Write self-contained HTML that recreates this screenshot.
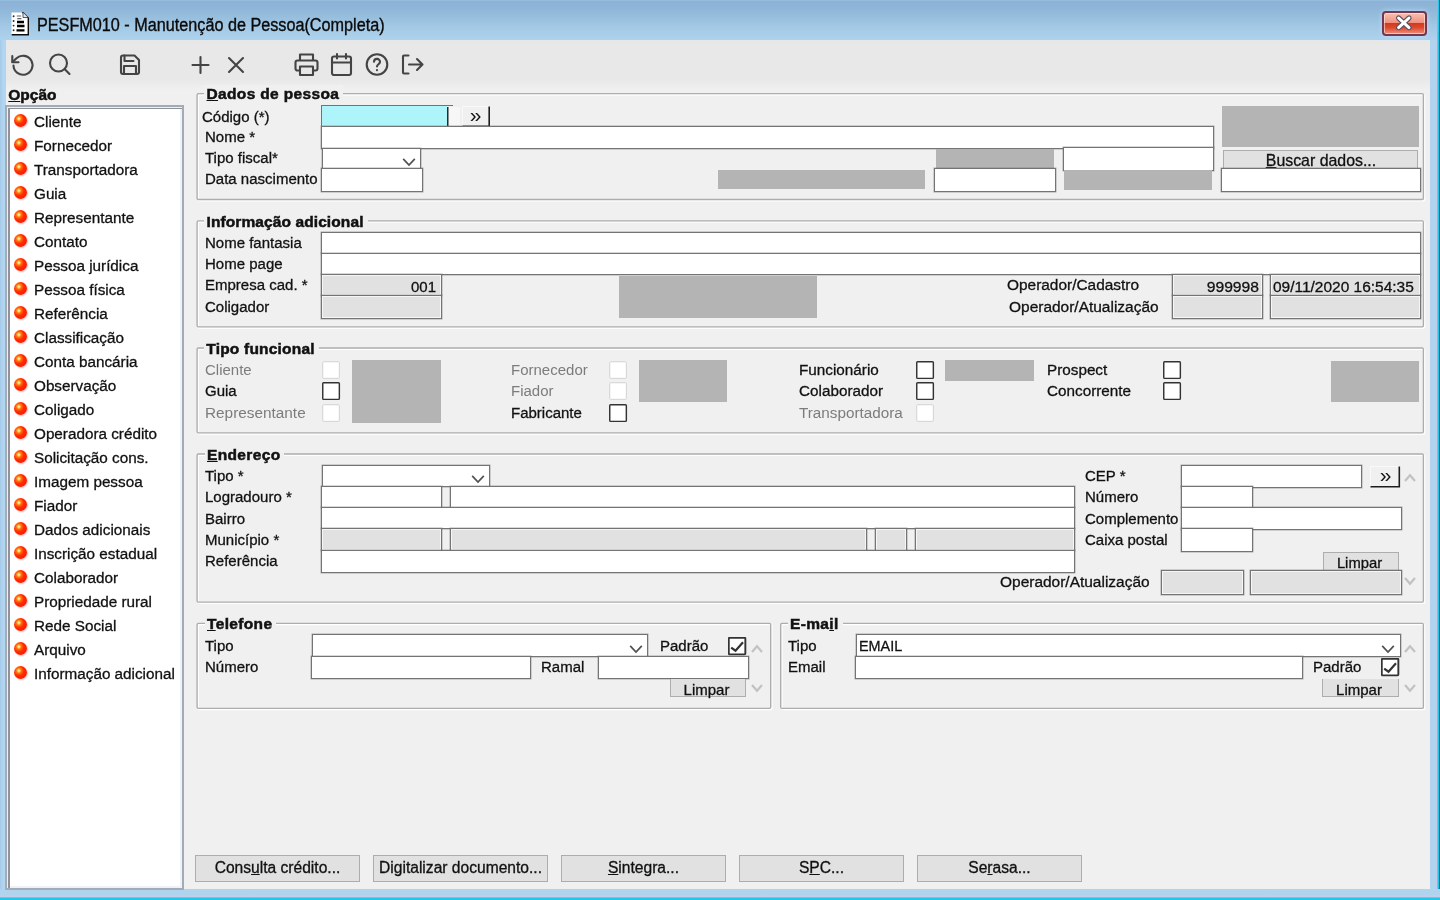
<!DOCTYPE html><html lang="pt-BR"><head><meta charset="utf-8"><title>PESFM010 - Manutenção de Pessoa(Completa)</title><style>
*{box-sizing:border-box;margin:0;padding:0}
html,body{width:1440px;height:900px;overflow:hidden}
body{position:relative;background:#b0d4ee;font-family:"Liberation Sans",sans-serif;font-size:15px;color:#111}
div,span,svg{position:absolute}
.l{filter:blur(.3px);white-space:nowrap;line-height:18px;height:18px;font-size:15.5px;color:#111;-webkit-text-stroke:0.3px #111;transform:scaleX(.968);transform-origin:0 0}
.dis{color:#7c7c7c;-webkit-text-stroke:0}
.b{transform:none;font-weight:bold;font-size:15.5px;letter-spacing:.35px;background:#f0f0f0;padding:0 4px 0 2.5px;-webkit-text-stroke:0.5px #111}
.f{background:#fff;border:1px solid #747474;box-shadow:0 0 0 .5px rgba(100,100,100,.5)}
.d{background:#e1e1e1;border:1px solid #747474;box-shadow:inset 0 0 0 1px #f6f6f6,0 0 0 .5px rgba(100,100,100,.5)}
.g{background:#b4b4b4}
.fs{border:1px solid #b9b9b9;border-radius:3px;box-shadow:inset 1px 1px 0 #fbfbfb,1px 1px 0 #fbfbfb}
.btn{filter:blur(.3px);background:#e1e1e1;border:1px solid #adadad;text-align:center;white-space:nowrap;font-size:15px;color:#111;-webkit-text-stroke:0.3px #111}
.cb{width:18px;height:18px;background:#fff;border:2px solid #454545;box-shadow:inset 0 0 0 .5px #999}
.cbd{width:18px;height:18px;background:#fff;border:1px solid #d0d0d0}
u{text-decoration:underline;text-underline-offset:1px}
.r{text-align:right;transform-origin:100% 0}
</style></head><body>
<div style="left:0;top:0;width:1440px;height:40px;background:linear-gradient(#9ac1e2 0,#8cb3d5 1.5px,#8fb6d8 8px,#97bddc 16px,#a2c8e5 26px,#acd2ed 39px)"></div>
<div style="left:0;top:40px;width:6px;height:860px;background:linear-gradient(90deg,#a4cae8,#b2d5f0 50%)"></div>
<div style="left:1430px;top:40px;width:8px;height:856px;background:linear-gradient(90deg,#b0d4ee 0,#b0d4ee 5.5px,#c4cbea 6.5px,#c4cbea 7px,#8fdcf2 8px)"></div>
<div style="left:1437px;top:0;width:3px;height:900px;background:linear-gradient(90deg,#6fd8f2,#22c6e6 40%,#22c6e6 66%,#0a6a94 67%)"></div>
<div style="left:0;top:889px;width:1440px;height:8px;background:#b0d4ee"></div>
<div style="left:0;top:895px;width:1440px;height:5px;background:linear-gradient(#b8d2ee 0,#c6cbe9 1.5px,#8fdcf2 2px,#22c6e6 3px)"></div>
<svg style="left:10px;top:11px" width="20" height="26" viewBox="0 0 20 26"><path d="M1.5 1.5h11.5l5 5v17h-16.5z" fill="#fff"/><path d="M12.5 1.2l5.8 5.8v16.7h-16.6" fill="none" stroke="#0c0c0c" stroke-width="1.4"/><path d="M13 1.5v5h5" fill="#dfe6ee" stroke="#333" stroke-width=".8"/><g fill="#2a2a2a"><circle cx="3.6" cy="5.2" r=".95"/><circle cx="3.6" cy="10" r=".95"/><circle cx="3.6" cy="14.6" r=".95"/><circle cx="3.6" cy="19.2" r=".95"/></g><path d="M6.8 5h4.4M7.2 7.6h4.2" stroke="#666" stroke-width="1.2"/><path d="M7 11h7M7 15h7.5M6.5 19.3h8" stroke="#000" stroke-width="2.3"/></svg>
<span id="title" style="left:37px;top:14px;font-size:18px;line-height:22px;white-space:nowrap;color:#0a0a0a;-webkit-text-stroke:.35px #0a0a0a;filter:blur(.3px);transform-origin:0 50%;transform:scaleX(.9)">PESFM010 - Manutenção de Pessoa(Completa)</span>
<div style="left:1382px;top:11px;width:45px;height:25px;border-radius:4px;border:2px solid #743650;background:linear-gradient(#f9c0b0 0,#f09282 46%,#d8381a 50%,#dc4a30 70%,#ee907a 100%);box-shadow:inset 0 0 0 1px rgba(255,235,225,.6),0 0 4px 1px rgba(200,230,255,.55)"></div>
<svg style="left:1394px;top:13px" width="20" height="20" viewBox="0 0 20 20"><path d="M4.6 5L15 14.6M15 5L4.6 14.6" stroke="#5a5060" stroke-width="5.2" stroke-linecap="round"/><path d="M4.6 5L15 14.6M15 5L4.6 14.6" stroke="#fff" stroke-width="3" stroke-linecap="round"/></svg>
<div class="" style="left:6px;top:40px;width:1424px;height:849px;background:#f0f0f0"></div>
<div class="" style="left:6px;top:40px;width:1424px;height:51px;background:linear-gradient(#e2e9f0 0,#e9e6e4 2.5px,#e8e8e8 5px,#e8e8e8 39px,#f0f0f0 50px)"></div>
<svg style="left:8px;top:50px" width="30" height="30" viewBox="0 0 30 30" fill="none" stroke="#444" stroke-width="2.1" stroke-linecap="round" stroke-linejoin="round"><path d="M5.5 15.5a9.5 9.5 0 1 0 3-7.2L4.5 12"/><path d="M4.3 6v6.2h6.2"/></svg>
<svg style="left:45px;top:50px" width="30" height="30" viewBox="0 0 30 30" fill="none" stroke="#444" stroke-width="2.1" stroke-linecap="round" stroke-linejoin="round"><circle cx="13.5" cy="13" r="8.5"/><path d="M19.8 19.3L24.5 24"/></svg>
<svg style="left:115px;top:50px" width="30" height="30" viewBox="0 0 30 30" fill="none" stroke="#444" stroke-width="2.1" stroke-linecap="round" stroke-linejoin="round"><path d="M6 7.5a2 2 0 0 1 2-2h11.5l4.5 4.5v12a2 2 0 0 1-2 2h-14a2 2 0 0 1-2-2z"/><path d="M9.5 5.5v5.5h9M9 24v-8h12v8"/></svg>
<svg style="left:185px;top:50px" width="30" height="30" viewBox="0 0 30 30" fill="none" stroke="#444" stroke-width="2.1" stroke-linecap="round" stroke-linejoin="round"><path d="M15.5 7v16M7.5 15h16"/></svg>
<svg style="left:221px;top:50px" width="30" height="30" viewBox="0 0 30 30" fill="none" stroke="#444" stroke-width="2.1" stroke-linecap="round" stroke-linejoin="round"><path d="M8 8l14 14M22 8l-14 14"/></svg>
<svg style="left:291px;top:50px" width="32" height="30" viewBox="0 0 32 30" fill="none" stroke="#444" stroke-width="2.1" stroke-linecap="round" stroke-linejoin="round"><path d="M9 10.5V4.5h13v6M9 20.5h-2.5a2 2 0 0 1-2-2v-6a2 2 0 0 1 2-2h18a2 2 0 0 1 2 2v6a2 2 0 0 1-2 2H22"/><path d="M9 16.5h13v8.5h-13z"/></svg>
<svg style="left:327px;top:50px" width="30" height="30" viewBox="0 0 30 30" fill="none" stroke="#444" stroke-width="2.1" stroke-linecap="round" stroke-linejoin="round"><rect x="5" y="6.5" width="19" height="18.5" rx="2"/><path d="M5 12.5h19M10 4v4.5M19 4v4.5"/></svg>
<svg style="left:362px;top:50px" width="30" height="30" viewBox="0 0 30 30" fill="none" stroke="#444" stroke-width="2.1" stroke-linecap="round" stroke-linejoin="round"><circle cx="15" cy="14.5" r="10.3"/><path d="M12 11.8a3 3 0 0 1 6 .2c0 2-3 2.5-3 4.5"/><path d="M15 20v.2"/></svg>
<svg style="left:398px;top:50px" width="30" height="30" viewBox="0 0 30 30" fill="none" stroke="#444" stroke-width="2.1" stroke-linecap="round" stroke-linejoin="round"><path d="M10.5 5.5h-4.5a1 1 0 0 0-1 1v16a1 1 0 0 0 1 1h4.5M11 14.5h13M19 9l5.5 5.5-5.5 5.5"/></svg>
<svg style="left:0;top:0" width="1440" height="900" viewBox="0 0 1440 900" fill="none"><rect x="198.35" y="94.85" width="1226.3" height="105.95" rx="1" stroke="#fff" stroke-width="1.3"/><rect x="198.35" y="222.15" width="1226.3" height="105.9" rx="1" stroke="#fff" stroke-width="1.3"/><rect x="198.35" y="349.25" width="1226.3" height="84.9" rx="1" stroke="#fff" stroke-width="1.3"/><rect x="198.35" y="455.25" width="1226.3" height="148.1" rx="1" stroke="#fff" stroke-width="1.3"/><rect x="198.35" y="624.6" width="573.6" height="84.95" rx="1" stroke="#fff" stroke-width="1.3"/><rect x="781.95" y="624.6" width="642.7" height="84.95" rx="1" stroke="#fff" stroke-width="1.3"/><rect x="197.1" y="93.6" width="1226.3" height="105.95" rx="1.3" stroke="#adadad" stroke-width="1.35"/><rect x="197.1" y="220.9" width="1226.3" height="105.9" rx="1.3" stroke="#adadad" stroke-width="1.35"/><rect x="197.1" y="348" width="1226.3" height="84.9" rx="1.3" stroke="#adadad" stroke-width="1.35"/><rect x="197.1" y="454" width="1226.3" height="148.1" rx="1.3" stroke="#adadad" stroke-width="1.35"/><rect x="197.1" y="623.35" width="573.6" height="84.95" rx="1.3" stroke="#adadad" stroke-width="1.35"/><rect x="780.7" y="623.35" width="642.7" height="84.95" rx="1.3" stroke="#adadad" stroke-width="1.35"/></svg>
<span class="l b" style="left:8.3px;top:85.9px;background:none;padding:0;font-size:15.5px;letter-spacing:0"><u>O</u>pção</span>
<div class="" style="left:5px;top:105px;width:179px;height:785px;background:#fff;border:2px solid #a3abb6;box-shadow:inset 1px 1px 0 #eceff3,inset 3px 2px 0 #8f9399,inset -2px -2px 0 #eef1f6"></div>
<div style="left:14px;top:114px;width:13px;height:13px;border-radius:50%;background:radial-gradient(circle at 37% 36%,#ffffd8 0,#ffd648 9%,#ff7412 22%,#ff2c00 42%,#f91e00 70%,#f94010 86%,#ff8a3a 100%);box-shadow:1px 1px 1.5px rgba(130,130,150,.45)"></div>
<span class="l" style="left:34.3px;top:113px;transform:scaleX(.985)">Cliente</span>
<div style="left:14px;top:138px;width:13px;height:13px;border-radius:50%;background:radial-gradient(circle at 37% 36%,#ffffd8 0,#ffd648 9%,#ff7412 22%,#ff2c00 42%,#f91e00 70%,#f94010 86%,#ff8a3a 100%);box-shadow:1px 1px 1.5px rgba(130,130,150,.45)"></div>
<span class="l" style="left:34.3px;top:137px;transform:scaleX(.985)">Fornecedor</span>
<div style="left:14px;top:162px;width:13px;height:13px;border-radius:50%;background:radial-gradient(circle at 37% 36%,#ffffd8 0,#ffd648 9%,#ff7412 22%,#ff2c00 42%,#f91e00 70%,#f94010 86%,#ff8a3a 100%);box-shadow:1px 1px 1.5px rgba(130,130,150,.45)"></div>
<span class="l" style="left:34.3px;top:161px;transform:scaleX(.985)">Transportadora</span>
<div style="left:14px;top:186px;width:13px;height:13px;border-radius:50%;background:radial-gradient(circle at 37% 36%,#ffffd8 0,#ffd648 9%,#ff7412 22%,#ff2c00 42%,#f91e00 70%,#f94010 86%,#ff8a3a 100%);box-shadow:1px 1px 1.5px rgba(130,130,150,.45)"></div>
<span class="l" style="left:34.3px;top:185px;transform:scaleX(.985)">Guia</span>
<div style="left:14px;top:210px;width:13px;height:13px;border-radius:50%;background:radial-gradient(circle at 37% 36%,#ffffd8 0,#ffd648 9%,#ff7412 22%,#ff2c00 42%,#f91e00 70%,#f94010 86%,#ff8a3a 100%);box-shadow:1px 1px 1.5px rgba(130,130,150,.45)"></div>
<span class="l" style="left:34.3px;top:209px;transform:scaleX(.985)">Representante</span>
<div style="left:14px;top:234px;width:13px;height:13px;border-radius:50%;background:radial-gradient(circle at 37% 36%,#ffffd8 0,#ffd648 9%,#ff7412 22%,#ff2c00 42%,#f91e00 70%,#f94010 86%,#ff8a3a 100%);box-shadow:1px 1px 1.5px rgba(130,130,150,.45)"></div>
<span class="l" style="left:34.3px;top:233px;transform:scaleX(.985)">Contato</span>
<div style="left:14px;top:258px;width:13px;height:13px;border-radius:50%;background:radial-gradient(circle at 37% 36%,#ffffd8 0,#ffd648 9%,#ff7412 22%,#ff2c00 42%,#f91e00 70%,#f94010 86%,#ff8a3a 100%);box-shadow:1px 1px 1.5px rgba(130,130,150,.45)"></div>
<span class="l" style="left:34.3px;top:257px;transform:scaleX(.985)">Pessoa jurídica</span>
<div style="left:14px;top:282px;width:13px;height:13px;border-radius:50%;background:radial-gradient(circle at 37% 36%,#ffffd8 0,#ffd648 9%,#ff7412 22%,#ff2c00 42%,#f91e00 70%,#f94010 86%,#ff8a3a 100%);box-shadow:1px 1px 1.5px rgba(130,130,150,.45)"></div>
<span class="l" style="left:34.3px;top:281px;transform:scaleX(.985)">Pessoa física</span>
<div style="left:14px;top:306px;width:13px;height:13px;border-radius:50%;background:radial-gradient(circle at 37% 36%,#ffffd8 0,#ffd648 9%,#ff7412 22%,#ff2c00 42%,#f91e00 70%,#f94010 86%,#ff8a3a 100%);box-shadow:1px 1px 1.5px rgba(130,130,150,.45)"></div>
<span class="l" style="left:34.3px;top:305px;transform:scaleX(.985)">Referência</span>
<div style="left:14px;top:330px;width:13px;height:13px;border-radius:50%;background:radial-gradient(circle at 37% 36%,#ffffd8 0,#ffd648 9%,#ff7412 22%,#ff2c00 42%,#f91e00 70%,#f94010 86%,#ff8a3a 100%);box-shadow:1px 1px 1.5px rgba(130,130,150,.45)"></div>
<span class="l" style="left:34.3px;top:329px;transform:scaleX(.985)">Classificação</span>
<div style="left:14px;top:354px;width:13px;height:13px;border-radius:50%;background:radial-gradient(circle at 37% 36%,#ffffd8 0,#ffd648 9%,#ff7412 22%,#ff2c00 42%,#f91e00 70%,#f94010 86%,#ff8a3a 100%);box-shadow:1px 1px 1.5px rgba(130,130,150,.45)"></div>
<span class="l" style="left:34.3px;top:353px;transform:scaleX(.985)">Conta bancária</span>
<div style="left:14px;top:378px;width:13px;height:13px;border-radius:50%;background:radial-gradient(circle at 37% 36%,#ffffd8 0,#ffd648 9%,#ff7412 22%,#ff2c00 42%,#f91e00 70%,#f94010 86%,#ff8a3a 100%);box-shadow:1px 1px 1.5px rgba(130,130,150,.45)"></div>
<span class="l" style="left:34.3px;top:377px;transform:scaleX(.985)">Observação</span>
<div style="left:14px;top:402px;width:13px;height:13px;border-radius:50%;background:radial-gradient(circle at 37% 36%,#ffffd8 0,#ffd648 9%,#ff7412 22%,#ff2c00 42%,#f91e00 70%,#f94010 86%,#ff8a3a 100%);box-shadow:1px 1px 1.5px rgba(130,130,150,.45)"></div>
<span class="l" style="left:34.3px;top:401px;transform:scaleX(.985)">Coligado</span>
<div style="left:14px;top:426px;width:13px;height:13px;border-radius:50%;background:radial-gradient(circle at 37% 36%,#ffffd8 0,#ffd648 9%,#ff7412 22%,#ff2c00 42%,#f91e00 70%,#f94010 86%,#ff8a3a 100%);box-shadow:1px 1px 1.5px rgba(130,130,150,.45)"></div>
<span class="l" style="left:34.3px;top:425px;transform:scaleX(.985)">Operadora crédito</span>
<div style="left:14px;top:450px;width:13px;height:13px;border-radius:50%;background:radial-gradient(circle at 37% 36%,#ffffd8 0,#ffd648 9%,#ff7412 22%,#ff2c00 42%,#f91e00 70%,#f94010 86%,#ff8a3a 100%);box-shadow:1px 1px 1.5px rgba(130,130,150,.45)"></div>
<span class="l" style="left:34.3px;top:449px;transform:scaleX(.985)">Solicitação cons.</span>
<div style="left:14px;top:474px;width:13px;height:13px;border-radius:50%;background:radial-gradient(circle at 37% 36%,#ffffd8 0,#ffd648 9%,#ff7412 22%,#ff2c00 42%,#f91e00 70%,#f94010 86%,#ff8a3a 100%);box-shadow:1px 1px 1.5px rgba(130,130,150,.45)"></div>
<span class="l" style="left:34.3px;top:473px;transform:scaleX(.985)">Imagem pessoa</span>
<div style="left:14px;top:498px;width:13px;height:13px;border-radius:50%;background:radial-gradient(circle at 37% 36%,#ffffd8 0,#ffd648 9%,#ff7412 22%,#ff2c00 42%,#f91e00 70%,#f94010 86%,#ff8a3a 100%);box-shadow:1px 1px 1.5px rgba(130,130,150,.45)"></div>
<span class="l" style="left:34.3px;top:497px;transform:scaleX(.985)">Fiador</span>
<div style="left:14px;top:522px;width:13px;height:13px;border-radius:50%;background:radial-gradient(circle at 37% 36%,#ffffd8 0,#ffd648 9%,#ff7412 22%,#ff2c00 42%,#f91e00 70%,#f94010 86%,#ff8a3a 100%);box-shadow:1px 1px 1.5px rgba(130,130,150,.45)"></div>
<span class="l" style="left:34.3px;top:521px;transform:scaleX(.985)">Dados adicionais</span>
<div style="left:14px;top:546px;width:13px;height:13px;border-radius:50%;background:radial-gradient(circle at 37% 36%,#ffffd8 0,#ffd648 9%,#ff7412 22%,#ff2c00 42%,#f91e00 70%,#f94010 86%,#ff8a3a 100%);box-shadow:1px 1px 1.5px rgba(130,130,150,.45)"></div>
<span class="l" style="left:34.3px;top:545px;transform:scaleX(.985)">Inscrição estadual</span>
<div style="left:14px;top:570px;width:13px;height:13px;border-radius:50%;background:radial-gradient(circle at 37% 36%,#ffffd8 0,#ffd648 9%,#ff7412 22%,#ff2c00 42%,#f91e00 70%,#f94010 86%,#ff8a3a 100%);box-shadow:1px 1px 1.5px rgba(130,130,150,.45)"></div>
<span class="l" style="left:34.3px;top:569px;transform:scaleX(.985)">Colaborador</span>
<div style="left:14px;top:594px;width:13px;height:13px;border-radius:50%;background:radial-gradient(circle at 37% 36%,#ffffd8 0,#ffd648 9%,#ff7412 22%,#ff2c00 42%,#f91e00 70%,#f94010 86%,#ff8a3a 100%);box-shadow:1px 1px 1.5px rgba(130,130,150,.45)"></div>
<span class="l" style="left:34.3px;top:593px;transform:scaleX(.985)">Propriedade rural</span>
<div style="left:14px;top:618px;width:13px;height:13px;border-radius:50%;background:radial-gradient(circle at 37% 36%,#ffffd8 0,#ffd648 9%,#ff7412 22%,#ff2c00 42%,#f91e00 70%,#f94010 86%,#ff8a3a 100%);box-shadow:1px 1px 1.5px rgba(130,130,150,.45)"></div>
<span class="l" style="left:34.3px;top:617px;transform:scaleX(.985)">Rede Social</span>
<div style="left:14px;top:642px;width:13px;height:13px;border-radius:50%;background:radial-gradient(circle at 37% 36%,#ffffd8 0,#ffd648 9%,#ff7412 22%,#ff2c00 42%,#f91e00 70%,#f94010 86%,#ff8a3a 100%);box-shadow:1px 1px 1.5px rgba(130,130,150,.45)"></div>
<span class="l" style="left:34.3px;top:641px;transform:scaleX(.985)">Arquivo</span>
<div style="left:14px;top:666px;width:13px;height:13px;border-radius:50%;background:radial-gradient(circle at 37% 36%,#ffffd8 0,#ffd648 9%,#ff7412 22%,#ff2c00 42%,#f91e00 70%,#f94010 86%,#ff8a3a 100%);box-shadow:1px 1px 1.5px rgba(130,130,150,.45)"></div>
<span class="l" style="left:34.3px;top:665px;transform:scaleX(.985)">Informação adicional</span>
<span class="l b" style="left:204px;top:85.4px;"><u>D</u>ados de pessoa</span>
<span class="l" style="left:202.3px;top:107.9px;">Código (*)</span>
<span class="l" style="left:205.3px;top:127.9px;">Nome *</span>
<span class="l" style="left:205.3px;top:148.9px;">Tipo fiscal*</span>
<span class="l" style="left:205.3px;top:169.9px;">Data nascimento</span>
<div class="" style="left:321px;top:105px;width:132px;height:1px;background:#2f80e4"></div>
<div class="" style="left:321px;top:105px;width:126px;height:22px;background:#aef4fb;border-left:1px solid #2f80e4;border-top:1px solid #2f80e4"></div>
<svg style="left:440px;top:100px" width="14" height="30" viewBox="0 0 14 30"><path d="M7.75 7V27" stroke="#2a2a2a" stroke-width="1.5" fill="none"/></svg>
<div class="" style="left:449px;top:107px;width:11px;height:20px;background:#f7f7f7"></div>
<div class="" style="left:462px;top:106px;width:28px;height:20px;background:#f0f0f0;border-top:1px solid #f9f9f9;border-left:1px solid #f9f9f9;border-bottom:1px solid #9a9a9a"></div>
<svg style="left:480px;top:100px" width="14" height="30" viewBox="0 0 14 30"><path d="M9.2 6.5V26.3" stroke="#1c1c1c" stroke-width="1.6" fill="none"/></svg>
<span style="left:460.7px;top:100px;width:30px;height:30px;line-height:30px;text-align:center;font-size:21px;color:#111;filter:blur(.3px)">»</span>
<div class="f" style="left:321px;top:126px;width:893px;height:23px;"></div>
<div class="f" style="left:322px;top:148px;width:99px;height:21px;"></div>
<svg style="left:399.6px;top:156.4px" width="18" height="12" viewBox="0 0 18 12"><path d="M3.2 2.9L9 9l5.8-6.1" fill="none" stroke="#505050" stroke-width="1.7"/></svg>
<div class="f" style="left:321px;top:168px;width:102px;height:24px;"></div>
<div class="g" style="left:1222px;top:106px;width:197px;height:41px;"></div>
<div class="btn" style="left:1223px;top:150px;width:195px;height:19px;line-height:19px;font-size:15.9px;padding-left:1px"><u>B</u>uscar dados...</div>
<div class="f" style="left:1221px;top:168px;width:200px;height:24px;"></div>
<div class="g" style="left:936px;top:149px;width:118px;height:19px;"></div>
<div class="f" style="left:1063px;top:147px;width:151px;height:24px;"></div>
<div class="g" style="left:718px;top:170px;width:207px;height:19px;"></div>
<div class="f" style="left:934px;top:168px;width:122px;height:24px;"></div>
<div class="g" style="left:1064px;top:170px;width:148px;height:20px;"></div>
<span class="l b" style="left:204px;top:212.9px;letter-spacing:.1px">Informação adicional</span>
<span class="l" style="left:205.3px;top:233.9px;">Nome fantasia</span>
<span class="l" style="left:205.3px;top:254.9px;">Home page</span>
<span class="l" style="left:205.3px;top:276.4px;">Empresa cad. *</span>
<span class="l" style="left:205.3px;top:297.9px;">Coligador</span>
<div class="f" style="left:321px;top:232px;width:1100px;height:22px;"></div>
<div class="f" style="left:321px;top:253px;width:1100px;height:22px;"></div>
<div class="d" style="left:321px;top:274px;width:121px;height:22px;"></div>
<span class="l r" style="left:320.6px;top:277.7px;width:115px">001</span>
<div class="d" style="left:321px;top:295px;width:121px;height:24px;"></div>
<div class="g" style="left:619px;top:276px;width:198px;height:42px;"></div>
<span class="l" style="left:1006.8px;top:276.4px;transform:scaleX(.995)">Operador/Cadastro</span>
<span class="l" style="left:1009.3px;top:297.9px;transform:scaleX(.998)">Operador/Atualização</span>
<div class="d" style="left:1172px;top:274px;width:91px;height:22px;"></div>
<span class="l r" style="left:1173.3px;top:277.7px;width:86px;transform:scaleX(1.01)">999998</span>
<div class="d" style="left:1270px;top:274px;width:151px;height:22px;"></div>
<span class="l" style="left:1272.9px;top:277.7px;transform:scaleX(.998)">09/11/2020 16:54:35</span>
<div class="d" style="left:1172px;top:295px;width:91px;height:24px;"></div>
<div class="d" style="left:1270px;top:295px;width:151px;height:24px;"></div>
<span class="l b" style="left:203.8px;top:339.9px;letter-spacing:.2px">Tipo funcional</span>
<span class="l dis" style="left:205.3px;top:361.2px;transform:scaleX(0.968)">Cliente</span>
<svg style="left:322px;top:361px" width="19" height="19" viewBox="0 0 19 19"><rect x=".75" y=".75" width="16.6" height="16.6" rx=".8" fill="#fff" stroke="#d2d2d2" stroke-width="1"/></svg>
<span class="l" style="left:205.3px;top:382px;transform:scaleX(0.968)">Guia</span>
<svg style="left:322px;top:382.3px" width="19" height="19" viewBox="0 0 19 19"><rect x=".75" y=".75" width="16.6" height="16.6" rx=".8" fill="#fff" stroke="#333" stroke-width="1.45"/></svg>
<span class="l dis" style="left:205.3px;top:403.5px;transform:scaleX(0.99)">Representante</span>
<svg style="left:322px;top:403.7px" width="19" height="19" viewBox="0 0 19 19"><rect x=".75" y=".75" width="16.6" height="16.6" rx=".8" fill="#fff" stroke="#d2d2d2" stroke-width="1"/></svg>
<span class="l dis" style="left:511.3px;top:361.2px;transform:scaleX(0.968)">Fornecedor</span>
<svg style="left:609px;top:361px" width="19" height="19" viewBox="0 0 19 19"><rect x=".75" y=".75" width="16.6" height="16.6" rx=".8" fill="#fff" stroke="#d2d2d2" stroke-width="1"/></svg>
<span class="l dis" style="left:511.3px;top:382px;transform:scaleX(0.968)">Fiador</span>
<svg style="left:609px;top:382.3px" width="19" height="19" viewBox="0 0 19 19"><rect x=".75" y=".75" width="16.6" height="16.6" rx=".8" fill="#fff" stroke="#d2d2d2" stroke-width="1"/></svg>
<span class="l" style="left:511.3px;top:403.5px;transform:scaleX(0.968)">Fabricante</span>
<svg style="left:609px;top:403.7px" width="19" height="19" viewBox="0 0 19 19"><rect x=".75" y=".75" width="16.6" height="16.6" rx=".8" fill="#fff" stroke="#333" stroke-width="1.45"/></svg>
<span class="l" style="left:799px;top:361.2px;transform:scaleX(0.985)">Funcionário</span>
<svg style="left:916px;top:361px" width="19" height="19" viewBox="0 0 19 19"><rect x=".75" y=".75" width="16.6" height="16.6" rx=".8" fill="#fff" stroke="#333" stroke-width="1.45"/></svg>
<span class="l" style="left:799px;top:382px;transform:scaleX(0.985)">Colaborador</span>
<svg style="left:916px;top:382.3px" width="19" height="19" viewBox="0 0 19 19"><rect x=".75" y=".75" width="16.6" height="16.6" rx=".8" fill="#fff" stroke="#333" stroke-width="1.45"/></svg>
<span class="l dis" style="left:799px;top:403.5px;transform:scaleX(0.985)">Transportadora</span>
<svg style="left:916px;top:403.7px" width="19" height="19" viewBox="0 0 19 19"><rect x=".75" y=".75" width="16.6" height="16.6" rx=".8" fill="#fff" stroke="#d2d2d2" stroke-width="1"/></svg>
<span class="l" style="left:1046.5px;top:361.2px;transform:scaleX(0.985)">Prospect</span>
<svg style="left:1163.3px;top:361px" width="19" height="19" viewBox="0 0 19 19"><rect x=".75" y=".75" width="16.6" height="16.6" rx=".8" fill="#fff" stroke="#333" stroke-width="1.45"/></svg>
<span class="l" style="left:1046.5px;top:382px;transform:scaleX(0.985)">Concorrente</span>
<svg style="left:1163.3px;top:382.3px" width="19" height="19" viewBox="0 0 19 19"><rect x=".75" y=".75" width="16.6" height="16.6" rx=".8" fill="#fff" stroke="#333" stroke-width="1.45"/></svg>
<div class="g" style="left:352px;top:360px;width:89px;height:63px;"></div>
<div class="g" style="left:639px;top:360px;width:88px;height:42px;"></div>
<div class="g" style="left:945px;top:360px;width:89px;height:21px;"></div>
<div class="g" style="left:1331px;top:361px;width:88px;height:41px;"></div>
<span class="l b" style="left:204.5px;top:445.9px;"><u>E</u>ndereço</span>
<span class="l" style="left:205.3px;top:466.9px;">Tipo *</span>
<span class="l" style="left:205.3px;top:488.4px;">Logradouro *</span>
<span class="l" style="left:205.3px;top:509.9px;">Bairro</span>
<span class="l" style="left:205.3px;top:530.9px;">Município *</span>
<span class="l" style="left:205.3px;top:552.4px;">Referência</span>
<div class="f" style="left:322px;top:465px;width:168px;height:22px;"></div>
<svg style="left:469.4px;top:473.3px" width="18" height="12" viewBox="0 0 18 12"><path d="M3.2 2.9L9 9l5.8-6.1" fill="none" stroke="#505050" stroke-width="1.7"/></svg>
<div class="f" style="left:321px;top:486px;width:121px;height:22px;"></div>
<div class="f" style="left:450px;top:486px;width:625px;height:22px;"></div>
<div class="f" style="left:321px;top:507px;width:754px;height:22px;"></div>
<div class="d" style="left:321px;top:528px;width:121px;height:23px;"></div>
<div class="d" style="left:450px;top:528px;width:417px;height:23px;"></div>
<div class="d" style="left:875px;top:528px;width:32px;height:23px;"></div>
<div class="d" style="left:915px;top:528px;width:160px;height:23px;"></div>
<div class="f" style="left:321px;top:550px;width:754px;height:23px;"></div>
<span class="l" style="left:1085.3px;top:466.9px;">CEP *</span>
<span class="l" style="left:1085.3px;top:488.4px;">Número</span>
<span class="l" style="left:1085.3px;top:509.9px;">Complemento</span>
<span class="l" style="left:1085.3px;top:530.9px;">Caixa postal</span>
<div class="f" style="left:1181px;top:465px;width:181px;height:23px;"></div>
<div class="" style="left:1370px;top:466px;width:30px;height:21px;background:#f0f0f0;border-top:1px solid #f9f9f9;border-left:1px solid #f9f9f9"></div>
<svg style="left:1366px;top:462px" width="38" height="30" viewBox="0 0 38 30"><path d="M33.3 4.5V24.8H4.5" stroke="#1c1c1c" stroke-width="1.6" fill="none"/></svg>
<span style="left:1370.5px;top:460.1px;width:30px;height:30px;line-height:30px;text-align:center;font-size:21px;color:#111;filter:blur(.3px)">»</span>
<div class="f" style="left:1181px;top:486px;width:72px;height:22px;"></div>
<div class="f" style="left:1181px;top:507px;width:221px;height:23px;"></div>
<div class="f" style="left:1181px;top:528px;width:72px;height:24px;"></div>
<div class="btn" style="left:1323px;top:552px;width:76px;height:20px;line-height:18px;padding:1px 3px 0 0;font-size:14.8px">Limpar</div>
<span class="l" style="left:1000px;top:572.9px;transform:scaleX(.998)">Operador/Atualização</span>
<div class="d" style="left:1161px;top:570px;width:83px;height:25px;"></div>
<div class="d" style="left:1250px;top:570px;width:152px;height:25px;"></div>
<svg style="left:1402.5px;top:473px" width="14" height="10" viewBox="0 0 14 10"><path d="M2 8l5-5.8 5 5.8" fill="none" stroke="#c2c2c2" stroke-width="2.2"/></svg>
<svg style="left:1402.5px;top:576px" width="14" height="10" viewBox="0 0 14 10"><path d="M2 2l5 5.8 5-5.8" fill="none" stroke="#c2c2c2" stroke-width="2.2"/></svg>
<span class="l b" style="left:204.5px;top:614.9px;"><u>T</u>elefone</span>
<span class="l" style="left:205.3px;top:636.9px;">Tipo</span>
<span class="l" style="left:205.3px;top:657.9px;">Número</span>
<div class="f" style="left:312px;top:634px;width:336px;height:23px;"></div>
<svg style="left:626.8px;top:642.6px" width="18" height="12" viewBox="0 0 18 12"><path d="M3.2 2.9L9 9l5.8-6.1" fill="none" stroke="#505050" stroke-width="1.7"/></svg>
<span class="l" style="left:660.3px;top:636.9px;">Padrão</span>
<svg style="left:728px;top:637px" width="19" height="19" viewBox="0 0 19 19"><rect x=".75" y=".75" width="16.6" height="16.6" rx=".8" fill="#fff" stroke="#333" stroke-width="1.9"/><path d="M3.2 10.6l4.3 3.1L15 5.2" fill="none" stroke="#333" stroke-width="2.2"/></svg>
<div class="f" style="left:311px;top:656px;width:220px;height:23px;"></div>
<span class="l" style="left:541.3px;top:657.9px;">Ramal</span>
<div class="f" style="left:598px;top:656px;width:151px;height:23px;"></div>
<div class="btn" style="left:670px;top:679px;width:76px;height:18px;line-height:17px;border-top:0;padding:2px 3px 0 0">Limpar</div>
<svg style="left:749.5px;top:643.5px" width="14" height="10" viewBox="0 0 14 10"><path d="M2 8l5-5.8 5 5.8" fill="none" stroke="#c2c2c2" stroke-width="2.2"/></svg>
<svg style="left:749.5px;top:683px" width="14" height="10" viewBox="0 0 14 10"><path d="M2 2l5 5.8 5-5.8" fill="none" stroke="#c2c2c2" stroke-width="2.2"/></svg>
<span class="l b" style="left:787.5px;top:614.9px;">E-ma<u>i</u>l</span>
<span class="l" style="left:788.3px;top:636.9px;">Tipo</span>
<span class="l" style="left:788.3px;top:657.9px;">Email</span>
<div class="f" style="left:856px;top:634px;width:545px;height:23px;"></div>
<span class="l" style="left:859.3px;top:636.9px;transform:scaleX(.93)">EMAIL</span>
<svg style="left:1379.2px;top:642.6px" width="18" height="12" viewBox="0 0 18 12"><path d="M3.2 2.9L9 9l5.8-6.1" fill="none" stroke="#505050" stroke-width="1.7"/></svg>
<div class="f" style="left:855px;top:656px;width:448px;height:23px;"></div>
<span class="l" style="left:1313.3px;top:657.9px;">Padrão</span>
<svg style="left:1381px;top:658px" width="19" height="19" viewBox="0 0 19 19"><rect x=".75" y=".75" width="16.6" height="16.6" rx=".8" fill="#fff" stroke="#333" stroke-width="1.9"/><path d="M3.2 10.6l4.3 3.1L15 5.2" fill="none" stroke="#333" stroke-width="2.2"/></svg>
<div class="btn" style="left:1322px;top:679px;width:77px;height:18px;line-height:17px;border-top:0;padding:2px 3px 0 0">Limpar</div>
<svg style="left:1402.5px;top:643.5px" width="14" height="10" viewBox="0 0 14 10"><path d="M2 8l5-5.8 5 5.8" fill="none" stroke="#c2c2c2" stroke-width="2.2"/></svg>
<svg style="left:1402.5px;top:683px" width="14" height="10" viewBox="0 0 14 10"><path d="M2 2l5 5.8 5-5.8" fill="none" stroke="#c2c2c2" stroke-width="2.2"/></svg>
<div class="btn" style="left:195px;top:855px;width:165px;height:27px;line-height:24px;font-size:15.6px">Cons<u>u</u>lta crédito...</div>
<div class="btn" style="left:373px;top:855px;width:175px;height:27px;line-height:24px;font-size:15.6px">Di<u>g</u>italizar documento...</div>
<div class="btn" style="left:561px;top:855px;width:165px;height:27px;line-height:24px;font-size:15.6px"><u>S</u>integra...</div>
<div class="btn" style="left:739px;top:855px;width:165px;height:27px;line-height:24px;font-size:15.6px">S<u>P</u>C...</div>
<div class="btn" style="left:917px;top:855px;width:165px;height:27px;line-height:24px;font-size:15.6px">Se<u>r</u>asa...</div>
</body></html>
